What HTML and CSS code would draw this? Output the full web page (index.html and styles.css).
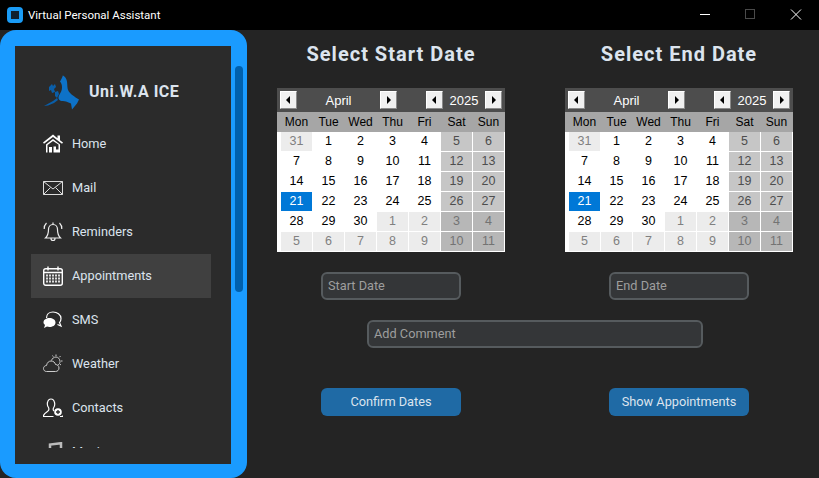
FILE: index.html
```html
<!DOCTYPE html>
<html lang="en">
<head>
  <meta charset="UTF-8">
  <title>Virtual Personal Assistant</title>
  <link rel="stylesheet" href="styles.css">
</head>
<body>
  <header class="titlebar">
    <span class="app-icon"></span>
    <span class="app-title">Virtual Personal Assistant</span>
    <div class="win-buttons">
      <svg width="46" height="30" viewBox="0 0 46 30"><path d="M19 14.500h10" stroke="#fff"/></svg>
      <svg width="46" height="30" viewBox="0 0 46 30"><rect x="18.500" y="9.500" width="9" height="9" fill="none" stroke="#4a4a4a"/></svg>
      <svg width="46" height="30" viewBox="0 0 46 30"><path d="M18 9.500l10 10M28 9.500l-10 10" stroke="#fff" fill="none"/></svg>
    </div>
  </header>

  <div class="app">
    <aside class="sidebar">
      <div class="panel">
        <div class="nav-clip">
          <div class="brand">
            <svg class="logo" width="36" height="38" viewBox="0 0 36 38">
              <path fill="#0d72c8" d="M20 2.500c2 1 3.500 3 4 6 .5 4 0 7 1.500 9.500 1.500 2.500 6 6 10.500 8.500l-2 4-5 6-1-6-5-2c-2-.5-4 0-6-1-1.500-1-2-3-1-5 1.500-2.500 3-5 3-8 0-3.500-1-4.500-2-6 1-2 2-3 3-6.500z"/>
              <path fill="#0a5ea8" d="M1 33l9-5 4-3 1 2-4 3-6 2.500zM6 14l3-3 1 2 2-2 1 3-2 2 1 3-3 1-1-3-2 1zM12 19l3-1 1 3-2 4-2-2z"/>
            </svg>
            <span class="brand-name">Uni.W.A ICE</span>
          </div>
          <nav class="nav">
            <a class="nav-item">
              <svg width="20" height="20" viewBox="0 0 20 20"><path fill="#fff" d="M10 0.500L0 8.500l1 1.200L10 3l9 6.700 1-1.200-3-2.300V1.500h-2.500v2.800z"/><path fill="#fff" d="M3 10.500L10 5l7 5.500V18.500h-6.500v-6H13v3h2.500v-5L10 7 4.500 11v7.500H3zM6 13h3v5.500H6z"/></svg>
              <span>Home</span>
            </a>
            <a class="nav-item">
              <svg width="20" height="20" viewBox="0 0 20 20"><path fill="none" stroke="#ddd" d="M.5 3.500h19v13H.5zM.5 3.500L10 11l9.500-7.500M.5 16.500L7.500 9.500M19.500 16.500L12.500 9.500"/></svg>
              <span>Mail</span>
            </a>
            <a class="nav-item">
              <svg width="20" height="20" viewBox="0 0 20 20"><path fill="none" stroke="#eee" stroke-width="1.200" d="M10 2.500c-3 0-4.500 2.500-4.500 5 0 4-.5 6-3 8.500h15c-2.500-2.500-3-4.500-3-8.500 0-2.500-1.500-5-4.500-5zM8 16.500a2 2 0 0 0 4 0M3.500 1C2 2.500 1 4.500 1.200 7M16.500 1c1.500 1.500 2.500 3.500 2.300 6M10 .5v2"/></svg>
              <span>Reminders</span>
            </a>
            <a class="nav-item active">
              <svg width="20" height="20" viewBox="0 0 20 20"><rect x=".7" y="2.700" width="18.600" height="16.600" rx="2" fill="none" stroke="#fff" stroke-width="1.400"/><path stroke="#fff" stroke-width="1.400" d="M5 .5v4M15 .5v4M1 6.500h18"/><path stroke="#ddd" stroke-width="1.800" stroke-dasharray="2 1" d="M3 9.500h14M3 12.500h14M3 15.500h14"/></svg>
              <span>Appointments</span>
            </a>
            <a class="nav-item">
              <svg width="20" height="20" viewBox="0 0 20 20"><path fill="none" stroke="#fff" stroke-width="1.200" d="M3.500 8C3.500 4.500 6 2 10 2s8 2.500 8 6.500c0 1.500-.5 3-1.500 4l1.500 3.500-3.500-1.500"/><path fill="#fff" d="M6.500 8C9.500 8 12.500 9.500 12.500 12.500S9.500 17 6.500 17c-1 0-2-.2-2.500-.5L1 18l1-3C1 14 .5 13.500.5 12.500.5 9.500 3.500 8 6.500 8z"/></svg>
              <span>SMS</span>
            </a>
            <a class="nav-item">
              <svg width="20" height="20" viewBox="0 0 20 20"><path fill="none" stroke="#ccc" d="M3.500 17.500C1.500 17.500.5 16 .5 14.500s1.200-3 3-3c.5-3 2.500-4.500 4.500-4.500 2.500 0 4 1.500 4.500 3.500 2 0 3.500 1.500 3.500 3.500s-1.500 3.500-3.500 3.500zM8.500 6.500C9 4.500 11 3 13 3s4 2 4 4.500c0 1.500-.8 3-2 3.500M13 .5v1.500M17.500 2l-1 1.200M19.500 7h-1.500M18 11l-1-.8M9.500 1.500l.8 1.200"/></svg>
              <span>Weather</span>
            </a>
            <a class="nav-item">
              <svg width="20" height="20" viewBox="0 0 20 20"><path fill="none" stroke="#fff" stroke-width="1.200" d="M11 13c-1-1-1-2-.5-3 1.500-2 1.500-3.500 1-5.500C11 2 9.500 1 8 1S5 2 4.500 4.500c-.5 2 0 3.500 1 5 .5 1 .5 2 0 3-.5 1-4 2-5 5v1h10M17 18.500h2.500v-1"/><circle cx="15" cy="14" r="3.800" fill="#fff"/><path stroke="#2b2b2b" stroke-width="1.300" d="M15 12v4M13 14h4"/></svg>
              <span>Contacts</span>
            </a>
            <a class="nav-item">
              <svg width="20" height="20" viewBox="0 0 20 20"><path fill="none" stroke="#bbb" stroke-width="2.500" d="M7 16V2.500l11-1.300V14"/><circle cx="4" cy="16" r="3" fill="#bbb"/></svg>
              <span>Music</span>
            </a>
          </nav>
        </div>
      </div>
      <div class="scrollbar"><div class="scroll-thumb"></div></div>
    </aside>

    <main class="content">
      <section class="date-col">
        <h2>Select Start Date</h2>
        <div class="calendar" id="startCal"></div>
        <input class="field" type="text" placeholder="Start Date">
      </section>
      <section class="date-col">
        <h2>Select End Date</h2>
        <div class="calendar" id="endCal"></div>
        <input class="field" type="text" placeholder="End Date">
      </section>
      <div class="comment-row">
        <input class="field comment" type="text" placeholder="Add Comment">
      </div>
      <div class="btn-cell"><button class="btn">Confirm Dates</button></div>
      <div class="btn-cell"><button class="btn">Show Appointments</button></div>
    </main>
  </div>

  <script>
    const weekdays = ['Mon', 'Tue', 'Wed', 'Thu', 'Fri', 'Sat', 'Sun'];
    const days = [31,1,2,3,4,5,6,7,8,9,10,11,12,13,14,15,16,17,18,19,20,21,22,23,24,25,26,27,28,29,30,1,2,3,4,5,6,7,8,9,10,11];
    const arrow = dir => '<button class="arrow ' + dir + '"></button>';

    function buildCalendar(el) {
      let html = '<div class="cal-head">' +
        arrow('left') + '<span class="cal-month">April</span>' + arrow('right') +
        arrow('left') + '<span class="cal-year">2025</span>' + arrow('right') + '</div>';
      html += '<div class="cal-week">';
      weekdays.forEach(d => { html += '<span>' + d + '</span>'; });
      html += '</div><div class="cal-days">';
      days.forEach((d, i) => {
        const other = i === 0 || i >= 31;
        const weekend = i % 7 >= 5;
        let cls = 'day';
        if (weekend) cls += ' weekend';
        if (other) cls += ' other';
        if (i === 21) cls += ' selected';
        html += '<span class="' + cls + '">' + d + '</span>';
      });
      html += '</div>';
      el.innerHTML = html;
    }
    buildCalendar(document.getElementById('startCal'));
    buildCalendar(document.getElementById('endCal'));
  </script>
</body>
</html>
```

FILE: styles.css
```css
* {
  box-sizing: border-box;
}
html, body {
  height: 100%;
}
body {
  margin: 0;
  background: #242424;
  color: #dce4ee;
  font-family: 'Roboto', Arial, sans-serif;
  overflow: hidden;
}
.titlebar {
  height: 30px;
  background: #000;
  display: flex;
  align-items: center;
  padding-left: 7px;
  color: #fff;
  font-size: 11.5px;
}
.app-icon {
  width: 16px;
  height: 16px;
  border: 4px solid #1a9bf5;
  border-radius: 4px;
  background: #10202e;
  margin-right: 5px;
}
.win-buttons {
  margin-left: auto;
  display: flex;
}
.app {
  display: flex;
  height: 448px;
}

/* sidebar */
.sidebar {
  width: 247px;
  flex: none;
  background: #1a9bff;
  border-radius: 16px;
  padding: 16px 4px 14px 15px;
  display: flex;
  gap: 4px;
}
.panel {
  width: 216px;
  background: #2b2b2b;
  padding-bottom: 16px;
}
.nav-clip {
  height: 100%;
  overflow: hidden;
}
.brand {
  display: flex;
  align-items: center;
  height: 76px;
  padding: 15px 0 0 28px;
}
.logo {
  flex: none;
}
.brand-name {
  margin-left: 10px;
  font-size: 16px;
  font-weight: 700;
  letter-spacing: 0.5px;
  color: #dce4ee;
}
.nav {
  display: flex;
  flex-direction: column;
  padding-left: 16px;
}
.nav-item {
  width: 180px;
  height: 44px;
  flex: none;
  display: flex;
  align-items: center;
  gap: 9px;
  padding-left: 12px;
  font-size: 12.75px;
  color: #dce4ee;
}
.nav-item svg {
  flex: none;
}
.nav-item span {
  margin-top: -2px;
}
.nav-item.active {
  background: #404040;
}
.scrollbar {
  width: 8px;
  padding-top: 20px;
}
.scroll-thumb {
  height: 226px;
  background: #0060ad;
  border-radius: 4px;
}

/* right side */
.content {
  padding: 12px 0 0 30px;
  display: grid;
  grid-template-columns: 228px 228px;
  grid-auto-rows: min-content;
  column-gap: 60px;
}
.date-col {
  display: flex;
  flex-direction: column;
  align-items: center;
}
.date-col h2 {
  margin: 0;
  height: 24px;
  line-height: 24px;
  font-size: 20px;
  font-weight: 700;
  letter-spacing: 1px;
  color: #dce4ee;
  white-space: nowrap;
}
.field {
  width: 140px;
  height: 28px;
  background: #343638;
  border: 2px solid #565b5e;
  border-radius: 6px;
  padding: 0 5px 2px;
  color: #dce4ee;
  font-family: inherit;
  font-size: 12.75px;
  outline: none;
}
.field::placeholder {
  color: #9e9e9e;
  opacity: 1;
}
.date-col .field {
  margin-top: 20px;
}
.comment-row {
  grid-column: 1 / 3;
  display: flex;
  justify-content: center;
  margin-top: 20px;
}
.comment {
  width: 336px;
}
.btn-cell {
  display: flex;
  justify-content: center;
  margin-top: 40px;
}
.btn {
  width: 140px;
  height: 28px;
  padding: 0 0 2px;
  background: #1f6aa5;
  border: none;
  border-radius: 6px;
  color: #dce4ee;
  font-family: inherit;
  font-size: 12.75px;
}

/* calendar */
.calendar {
  width: 228px;
  height: 164px;
  margin-top: 22px;
  background: #fff;
  font-family: 'Liberation Sans', Arial, sans-serif;
}
.cal-head {
  height: 24px;
  background: #4d4d4d;
  display: flex;
  align-items: center;
  padding: 0 3px;
  color: #fff;
  font-size: 13px;
}
.cal-month {
  width: 85px;
  text-align: center;
}
.cal-year {
  width: 43px;
  text-align: center;
}
.arrow {
  width: 17px;
  height: 18px;
  padding: 0;
  flex: none;
  position: relative;
  background: #f0f0f0;
  border: 1px solid;
  border-color: #fff #8a8a8a #8a8a8a #fff;
}
.arrow::after {
  content: "";
  position: absolute;
  top: 4px;
  border: 4px solid transparent;
}
.arrow.left::after {
  left: 1px;
  border-right-color: #000;
}
.arrow.right::after {
  left: 6px;
  border-left-color: #000;
}
.arrow.right + .arrow.left {
  margin-left: 29px;
}
.cal-week {
  height: 20px;
  background: #a6a6a6;
  display: grid;
  grid-template-columns: repeat(7, 32px);
  padding-left: 3.5px;
  color: #000;
  font-size: 12px;
  line-height: 20px;
  text-align: center;
}
.cal-days {
  display: grid;
  grid-template-columns: repeat(7, 32px);
  grid-auto-rows: 20px;
  padding-left: 4px;
  font-size: 12.5px;
  color: #000;
}
.day {
  margin: 0 1px 1px 0;
  line-height: 19px;
  text-align: center;
}
.day.weekend {
  background: #c6c6c6;
  color: #4d4d4d;
}
.day.other {
  background: #ececec;
  color: #808080;
}
.day.weekend.other {
  background: #b7b7b7;
  color: #737373;
}
.day.selected {
  background: #0078d7;
  color: #fff;
}
```
